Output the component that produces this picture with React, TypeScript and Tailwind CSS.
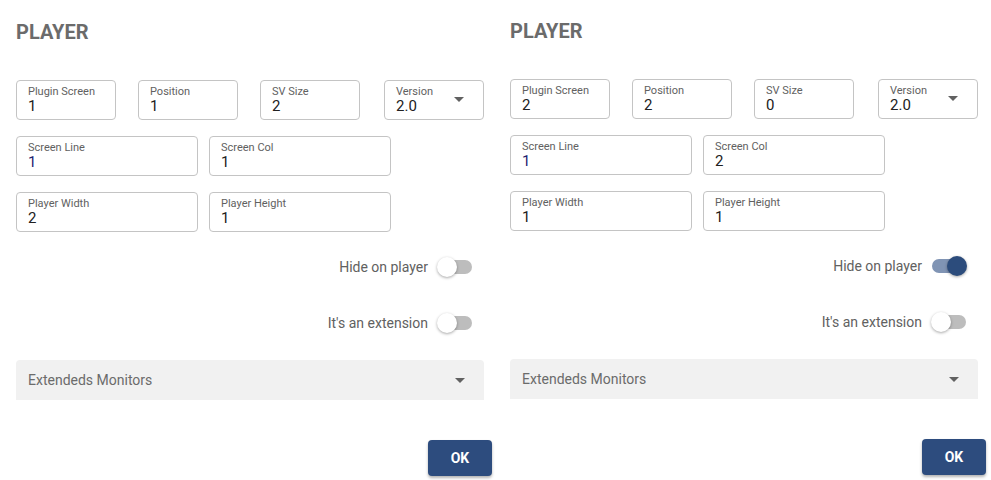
import React from 'react'

type Field = { label: string; value: string; w: string; select?: boolean; valueClass?: string }

function Caret() {
  return (
    <svg width="10" height="5" viewBox="0 0 10 5" className="fill-[#616161]">
      <path d="M0 0 L10 0 L5 5 Z" />
    </svg>
  )
}

function TextField({ label, value, w, select, valueClass }: Field) {
  return (
    <div
      className={`${w} h-10 shrink-0 rounded-[4px] border border-[#c4c4c4] bg-white px-[11px] pt-[4px] flex items-start justify-between`}
    >
      <div className="flex flex-col leading-none">
        <span className="text-[11px] text-[#616161] leading-[13px]">{label}</span>
        <span className={`text-[15px] leading-[17px] ${valueClass ?? 'text-[#212121]'}`}>{value}</span>
      </div>
      {select && (
        <div className="pt-[12px] pr-[8px]">
          <Caret />
        </div>
      )}
    </div>
  )
}

function Toggle({ label, on }: { label: string; on?: boolean }) {
  return (
    <div className="flex items-center justify-end pr-[12px] h-6">
      <span className="text-[14px] text-[#616161] mr-[10px]">{label}</span>
      <div className="relative w-[34px] h-5 flex items-center">
        <div className={`w-[34px] h-[14px] rounded-full ${on ? 'bg-[#8094b4]' : 'bg-[#bdbdbd]'}`} />
        <div
          className={`absolute top-0 h-5 w-5 rounded-full shadow-[0_1px_3px_rgba(0,0,0,0.35)] ${
            on ? 'left-[15px] bg-[#2c4c7c]' : '-left-px bg-white'
          }`}
        />
      </div>
    </div>
  )
}

function Panel({ values, hide, shift }: { values: string[]; hide?: boolean; shift?: boolean }) {
  return (
    <div className={`w-[494px] pl-4 ${shift ? '-mt-px' : ''}`}>
      <h2 className="pt-[19px] h-[44px] text-[20px] font-bold text-[#6b6b6b] leading-[26px]">PLAYER</h2>
      <div className="w-[468px] mt-[36px] flex flex-col gap-4">
        <div className="flex">
          <TextField label="Plugin Screen" value={values[0]} w="w-[100px]" />
          <div className="w-[22px]" />
          <TextField label="Position" value={values[1]} w="w-[100px]" />
          <div className="w-[22px]" />
          <TextField label="SV Size" value={values[2]} w="w-[100px]" />
          <div className="w-[24px]" />
          <TextField label="Version" value="2.0" w="w-[100px]" select />
        </div>
        <div className="flex gap-[11px]">
          <TextField label="Screen Line" value={values[3]} w="w-[182px]" valueClass="text-[#1c2470]" />
          <TextField label="Screen Col" value={values[4]} w="w-[182px]" />
        </div>
        <div className="flex gap-[11px]">
          <TextField label="Player Width" value={values[5]} w="w-[182px]" />
          <TextField label="Player Height" value={values[6]} w="w-[182px]" />
        </div>
        <div className="mt-[7px] flex flex-col gap-8">
          <Toggle label="Hide on player" on={hide} />
          <Toggle label="It's an extension" />
        </div>
        <div className="mt-[9px] h-10 rounded-t-[4px] bg-[#f1f1f1] flex items-center justify-between px-[12px]">
          <span className="text-[14px] text-[#6b6b6b]">Extendeds Monitors</span>
          <div className="pr-[7px]">
            <Caret />
          </div>
        </div>
      </div>
      <div className="w-[476px] flex justify-end mt-[40px]">
        <button className="w-16 h-9 rounded-[4px] bg-[#2d4c7e] text-white text-[14px] font-bold shadow-[0_2px_3px_rgba(0,0,0,0.3)]">
          OK
        </button>
      </div>
    </div>
  )
}

export default function App() {
  return (
    <div className="w-[991px] h-[480px] bg-white overflow-hidden flex font-['Roboto',sans-serif]">
      <Panel values={['1', '1', '2', '1', '1', '2', '1']} />
      <Panel values={['2', '2', '0', '1', '2', '1', '1']} hide shift />
    </div>
  )
}
